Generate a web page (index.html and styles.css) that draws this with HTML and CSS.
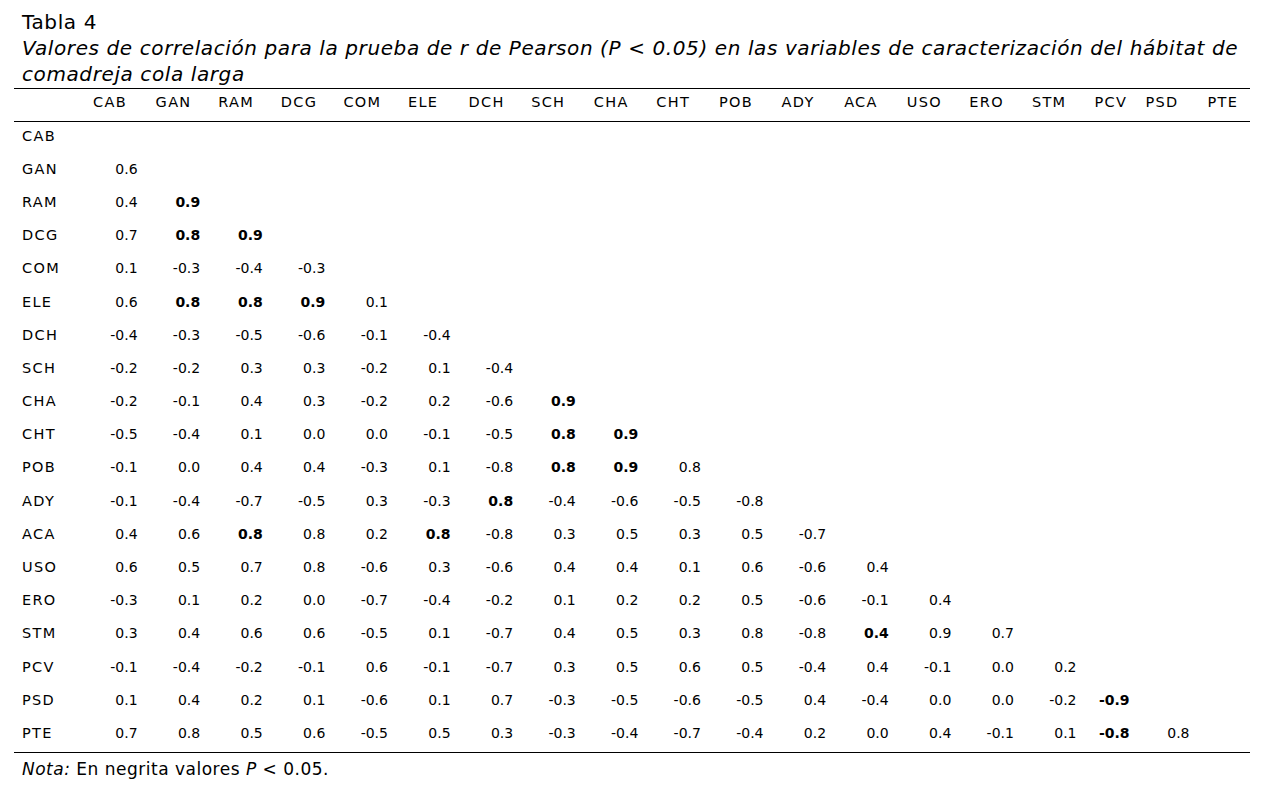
FILE: index.html
```html
<!DOCTYPE html>
<html lang="es">
<head>
<meta charset="utf-8">
<link rel="stylesheet" href="styles.css">
</head>
<body>
<div class="page">
  <div class="tnum">Tabla 4</div>
  <div class="caption">Valores de correlación para la prueba de r de Pearson (P &lt; 0.05) en las variables de caracterización del hábitat de<br>comadreja cola larga</div>
  <table class="corr">
    <colgroup>
      <col class="c-label">
      <col class="c-std"><col class="c-std"><col class="c-std"><col class="c-std">
      <col class="c-std"><col class="c-std"><col class="c-std"><col class="c-std">
      <col class="c-std"><col class="c-std"><col class="c-std"><col class="c-std">
      <col class="c-std"><col class="c-std"><col class="c-std"><col class="c-std">
      <col class="c-pcv"><col class="c-psd"><col class="c-pte">
    </colgroup>
    <thead>
      <tr>
        <th></th><th>CAB</th><th>GAN</th><th>RAM</th><th>DCG</th><th>COM</th><th class="h-ele">ELE</th><th>DCH</th><th>SCH</th><th>CHA</th><th>CHT</th><th>POB</th><th>ADY</th><th>ACA</th><th>USO</th><th>ERO</th><th>STM</th><th>PCV</th><th class="h-psd">PSD</th><th class="h-pte">PTE</th>
      </tr>
    </thead>
    <tbody>
      <tr><th>CAB</th><td></td><td></td><td></td><td></td><td></td><td></td><td></td><td></td><td></td><td></td><td></td><td></td><td></td><td></td><td></td><td></td><td></td><td></td><td></td></tr>
      <tr><th>GAN</th><td>0.6</td><td></td><td></td><td></td><td></td><td></td><td></td><td></td><td></td><td></td><td></td><td></td><td></td><td></td><td></td><td></td><td></td><td></td><td></td></tr>
      <tr><th>RAM</th><td>0.4</td><td class="b">0.9</td><td></td><td></td><td></td><td></td><td></td><td></td><td></td><td></td><td></td><td></td><td></td><td></td><td></td><td></td><td></td><td></td><td></td></tr>
      <tr><th>DCG</th><td>0.7</td><td class="b">0.8</td><td class="b">0.9</td><td></td><td></td><td></td><td></td><td></td><td></td><td></td><td></td><td></td><td></td><td></td><td></td><td></td><td></td><td></td><td></td></tr>
      <tr><th>COM</th><td>0.1</td><td>-0.3</td><td>-0.4</td><td>-0.3</td><td></td><td></td><td></td><td></td><td></td><td></td><td></td><td></td><td></td><td></td><td></td><td></td><td></td><td></td><td></td></tr>
      <tr><th>ELE</th><td>0.6</td><td class="b">0.8</td><td class="b">0.8</td><td class="b">0.9</td><td>0.1</td><td></td><td></td><td></td><td></td><td></td><td></td><td></td><td></td><td></td><td></td><td></td><td></td><td></td><td></td></tr>
      <tr><th>DCH</th><td>-0.4</td><td>-0.3</td><td>-0.5</td><td>-0.6</td><td>-0.1</td><td>-0.4</td><td></td><td></td><td></td><td></td><td></td><td></td><td></td><td></td><td></td><td></td><td></td><td></td><td></td></tr>
      <tr><th>SCH</th><td>-0.2</td><td>-0.2</td><td>0.3</td><td>0.3</td><td>-0.2</td><td>0.1</td><td>-0.4</td><td></td><td></td><td></td><td></td><td></td><td></td><td></td><td></td><td></td><td></td><td></td><td></td></tr>
      <tr><th>CHA</th><td>-0.2</td><td>-0.1</td><td>0.4</td><td>0.3</td><td>-0.2</td><td>0.2</td><td>-0.6</td><td class="b">0.9</td><td></td><td></td><td></td><td></td><td></td><td></td><td></td><td></td><td></td><td></td><td></td></tr>
      <tr><th>CHT</th><td>-0.5</td><td>-0.4</td><td>0.1</td><td>0.0</td><td>0.0</td><td>-0.1</td><td>-0.5</td><td class="b">0.8</td><td class="b">0.9</td><td></td><td></td><td></td><td></td><td></td><td></td><td></td><td></td><td></td><td></td></tr>
      <tr><th>POB</th><td>-0.1</td><td>0.0</td><td>0.4</td><td>0.4</td><td>-0.3</td><td>0.1</td><td>-0.8</td><td class="b">0.8</td><td class="b">0.9</td><td>0.8</td><td></td><td></td><td></td><td></td><td></td><td></td><td></td><td></td><td></td></tr>
      <tr><th>ADY</th><td>-0.1</td><td>-0.4</td><td>-0.7</td><td>-0.5</td><td>0.3</td><td>-0.3</td><td class="b">0.8</td><td>-0.4</td><td>-0.6</td><td>-0.5</td><td>-0.8</td><td></td><td></td><td></td><td></td><td></td><td></td><td></td><td></td></tr>
      <tr><th>ACA</th><td>0.4</td><td>0.6</td><td class="b">0.8</td><td>0.8</td><td>0.2</td><td class="b">0.8</td><td>-0.8</td><td>0.3</td><td>0.5</td><td>0.3</td><td>0.5</td><td>-0.7</td><td></td><td></td><td></td><td></td><td></td><td></td><td></td></tr>
      <tr><th>USO</th><td>0.6</td><td>0.5</td><td>0.7</td><td>0.8</td><td>-0.6</td><td>0.3</td><td>-0.6</td><td>0.4</td><td>0.4</td><td>0.1</td><td>0.6</td><td>-0.6</td><td>0.4</td><td></td><td></td><td></td><td></td><td></td><td></td></tr>
      <tr><th>ERO</th><td>-0.3</td><td>0.1</td><td>0.2</td><td>0.0</td><td>-0.7</td><td>-0.4</td><td>-0.2</td><td>0.1</td><td>0.2</td><td>0.2</td><td>0.5</td><td>-0.6</td><td>-0.1</td><td>0.4</td><td></td><td></td><td></td><td></td><td></td></tr>
      <tr><th>STM</th><td>0.3</td><td>0.4</td><td>0.6</td><td>0.6</td><td>-0.5</td><td>0.1</td><td>-0.7</td><td>0.4</td><td>0.5</td><td>0.3</td><td>0.8</td><td>-0.8</td><td class="b">0.4</td><td>0.9</td><td>0.7</td><td></td><td></td><td></td><td></td></tr>
      <tr><th>PCV</th><td>-0.1</td><td>-0.4</td><td>-0.2</td><td>-0.1</td><td>0.6</td><td>-0.1</td><td>-0.7</td><td>0.3</td><td>0.5</td><td>0.6</td><td>0.5</td><td>-0.4</td><td>0.4</td><td>-0.1</td><td>0.0</td><td>0.2</td><td></td><td></td><td></td></tr>
      <tr><th>PSD</th><td>0.1</td><td>0.4</td><td>0.2</td><td>0.1</td><td>-0.6</td><td>0.1</td><td>0.7</td><td>-0.3</td><td>-0.5</td><td>-0.6</td><td>-0.5</td><td>0.4</td><td>-0.4</td><td>0.0</td><td>0.0</td><td>-0.2</td><td class="b">-0.9</td><td></td><td></td></tr>
      <tr><th>PTE</th><td>0.7</td><td>0.8</td><td>0.5</td><td>0.6</td><td>-0.5</td><td>0.5</td><td>0.3</td><td>-0.3</td><td>-0.4</td><td>-0.7</td><td>-0.4</td><td>0.2</td><td>0.0</td><td>0.4</td><td>-0.1</td><td>0.1</td><td class="b">-0.8</td><td class="psd-v">0.8</td><td></td></tr>
    </tbody>
  </table>
  <div class="note"><i>Nota:</i> En negrita valores <i>P</i> &lt; 0.05.</div>
</div>
</body>
</html>
```

FILE: styles.css
```css
html, body {
  margin: 0;
  padding: 0;
  background: #ffffff;
}

body {
  font-family: "DejaVu Sans", "Liberation Sans", sans-serif;
  color: #000000;
}

.page {
  padding: 9px 19px 0 14px;
}

.tnum {
  padding-left: 8px;
  font-size: 20px;
  letter-spacing: 0.6px;
  line-height: 26px;
}

.caption {
  padding-left: 8px;
  font-size: 20px;
  letter-spacing: 0.6px;
  line-height: 26px;
  font-style: italic;
  white-space: nowrap;
  margin-bottom: 1px;
}

.corr {
  width: 1236px;
  table-layout: fixed;
  border-collapse: collapse;
  font-size: 14px;
}

.c-label { width: 66px; }
.c-std { width: 62.6px; }
.c-pcv { width: 53px; }
.c-psd { width: 62px; }
.c-pte { width: 53.4px; }

.corr thead tr {
  height: 33px;
  border-top: 1.5px solid #000;
  border-bottom: 1.5px solid #000;
}

.corr thead th {
  font-weight: normal;
  text-align: left;
  padding: 0 0 6px 13px;
  font-size: 14.5px;
  letter-spacing: 1.3px;
}

.corr thead th.h-ele { padding-left: 15px; }
.corr thead th.h-psd { padding-left: 11px; }
.corr thead th.h-pte { padding-left: 11px; }

.corr tbody tr {
  height: 33.2px;
}

.corr tbody tr:last-child {
  border-bottom: 1.5px solid #000;
}

.corr tbody th {
  font-weight: normal;
  text-align: left;
  padding: 0 0 5px 8px;
  font-size: 14.5px;
  letter-spacing: 1.3px;
}

.corr td {
  text-align: right;
  padding: 0 5px 5px 0;
  white-space: nowrap;
}

.corr td.b {
  font-weight: bold;
}

.corr td.psd-v {
  padding-right: 7px;
}

.note {
  padding: 4px 0 0 8px;
  font-size: 17px;
  letter-spacing: 0.5px;
  line-height: 24px;
}
```
